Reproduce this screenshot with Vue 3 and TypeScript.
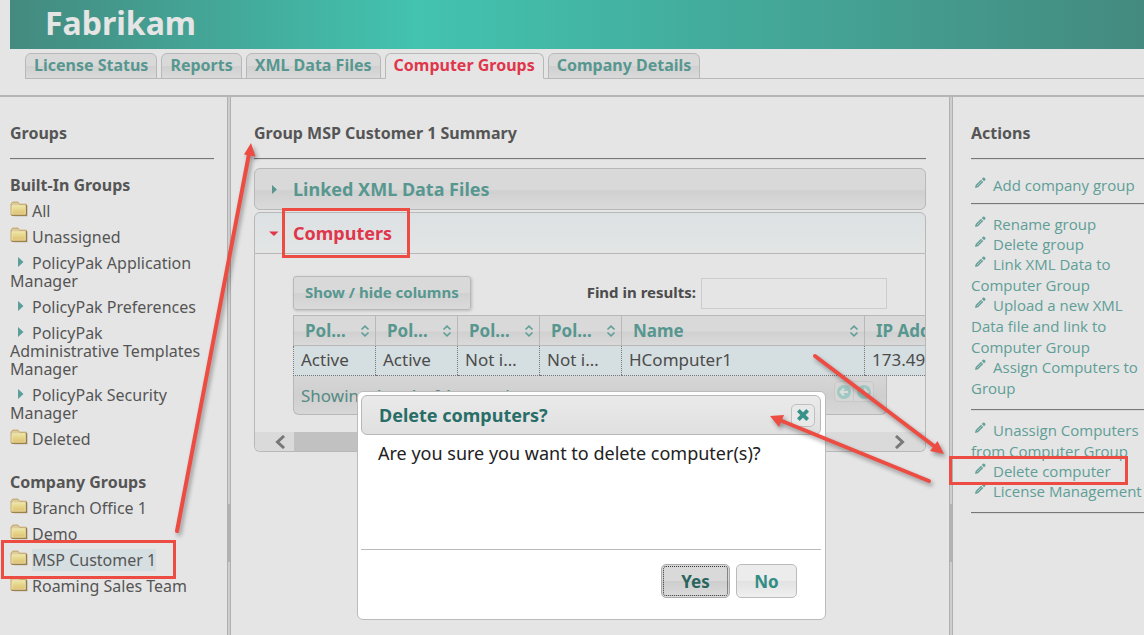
<script setup lang="ts">
import { ref } from 'vue'

interface GroupItem {
  name: string
  kind: 'folder' | 'branch'
}

const tabs = ['License Status', 'Reports', 'XML Data Files', 'Computer Groups', 'Company Details']
const activeTab = ref('Computer Groups')

const builtIn: GroupItem[] = [
  { name: 'All', kind: 'folder' },
  { name: 'Unassigned', kind: 'folder' },
  { name: 'PolicyPak Application Manager', kind: 'branch' },
  { name: 'PolicyPak Preferences', kind: 'branch' },
  { name: 'PolicyPak Administrative Templates Manager', kind: 'branch' },
  { name: 'PolicyPak Security Manager', kind: 'branch' },
  { name: 'Deleted', kind: 'folder' },
]
const company: GroupItem[] = [
  { name: 'Branch Office 1', kind: 'folder' },
  { name: 'Demo', kind: 'folder' },
  { name: 'MSP Customer 1', kind: 'folder' },
  { name: 'Roaming Sales Team', kind: 'folder' },
]
const sections = [
  { title: 'Built-In Groups', items: builtIn },
  { title: 'Company Groups', items: company },
]
const selected = ref('MSP Customer 1')

const actionSets = [
  ['Add company group'],
  ['Rename group', 'Delete group', 'Link XML Data to Computer Group', 'Upload a new XML Data file and link to Computer Group', 'Assign Computers to Group'],
  ['Unassign Computers from Computer Group', 'Delete computer', 'License Management'],
]

const columns = ['Pol…', 'Pol…', 'Pol…', 'Pol…', 'Name', 'IP Address']
const row = ['Active', 'Active', 'Not i…', 'Not i…', 'HComputer1', '173.49.18.20']
const search = ref('')
</script>

<template>
  <div class="page">
    <header class="banner"><h1>Fabrikam</h1></header>

    <nav class="tabs">
      <a v-for="t in tabs" :key="t" href="#" class="tab" :class="{ active: t === activeTab }" @click.prevent="activeTab = t">{{ t }}</a>
    </nav>

    <div class="panes">
      <aside class="groups">
        <h2>Groups</h2>
        <hr />
        <section v-for="s in sections" :key="s.title" class="group-section">
          <h3>{{ s.title }}</h3>
          <ul>
            <li v-for="g in s.items" :key="g.name">
              <svg v-if="g.kind === 'folder'" class="folder" width="19" height="17" viewBox="0 0 18 16" aria-hidden="true">
                <defs>
                  <linearGradient id="folderFill" x1="0" y1="0" x2="0" y2="1">
                    <stop offset="0" stop-color="#ebe6a0" />
                    <stop offset="1" stop-color="#dfc071" />
                  </linearGradient>
                </defs>
                <path d="M3 4h13.5v10.500H4z" fill="#8d8a80" opacity=".7" />
                <path d="M1 13V3L2.500 1H7.500L9 3H15.500V13.500H1.500z" fill="#dccb9b" stroke="#c0a160" stroke-width=".9" />
                <path d="M2 4.500H14.500V12.500H2z" fill="url(#folderFill)" stroke="#f1e6b4" stroke-width=".8" />
                <path d="M1.500 13.500H15.500V4" fill="none" stroke="#94753a" />
              </svg>
              <svg v-else class="branch" width="6" height="10" viewBox="0 0 6 10" aria-hidden="true"><path d="M0 0L5.500 5L0 10z" fill="#5a9f99" /></svg>
              <a href="#" :class="{ selected: g.name === selected }" @click.prevent="selected = g.name">{{ g.name }}</a>
            </li>
          </ul>
        </section>
      </aside>

      <div class="splitter"><span /></div>

      <main class="summary">
        <h2>Group MSP Customer 1 Summary</h2>
        <hr />
        <button type="button" class="acc-head">
          <svg width="10" height="10" viewBox="0 0 10 10" aria-hidden="true"><path d="M3 1L8 5.500L3 10z" fill="#5a9690" /></svg>
          Linked XML Data Files
        </button>
        <button type="button" class="acc-head open">
          <svg width="10" height="10" viewBox="0 0 10 10" aria-hidden="true"><path d="M0 3.500H9.500L5 8z" fill="#e0364c" /></svg>
          Computers
        </button>
        <section class="acc-body">
          <div class="scroll-area">
            <div class="toolbar">
              <button type="button" class="columns-btn">Show / hide columns</button>
              <label for="find">Find in results:</label>
              <input id="find" v-model="search" type="text" />
            </div>
            <table>
              <colgroup>
                <col class="c-small" /><col class="c-small" /><col class="c-small" /><col class="c-small" />
                <col class="c-name" /><col class="c-ip" />
              </colgroup>
              <thead>
                <tr>
                  <th v-for="(c, i) in columns" :key="i" scope="col">
                    <div class="th-in">
                      <span>{{ c }}</span>
                      <svg width="10" height="12" viewBox="0 0 10 12" aria-hidden="true"><path d="M1.500 4.500L5 1.200L8.500 4.500M1.500 7.500L5 10.800L8.500 7.500" fill="none" stroke="#5f9f97" stroke-width="1.600" /></svg>
                    </div>
                  </th>
                </tr>
              </thead>
              <tbody>
                <tr><td v-for="(c, i) in row" :key="i">{{ c }}</td></tr>
              </tbody>
            </table>
            <div class="table-foot">
              <span>Showing 1 to 1 of 1 records</span>
              <div class="pager">
                <button type="button" disabled aria-label="Previous page">
                  <svg width="16" height="16" viewBox="0 0 16 16" aria-hidden="true"><circle cx="8" cy="8" r="7" fill="#9fc8c2" /><path d="M12 8H5M8 4.500L4.500 8L8 11.500" fill="none" stroke="#dcdcdc" stroke-width="2" /></svg>
                </button>
                <button type="button" disabled aria-label="Next page">
                  <svg width="16" height="16" viewBox="0 0 16 16" aria-hidden="true"><circle cx="8" cy="8" r="7" fill="#9fc8c2" /><path d="M4 8H11M8 4.500L11.500 8L8 11.500" fill="none" stroke="#dcdcdc" stroke-width="2" /></svg>
                </button>
              </div>
            </div>
          </div>
          <div class="hscroll">
            <svg width="12" height="14" viewBox="0 0 12 14" aria-hidden="true"><path d="M10 1L3.500 7L10 13" fill="none" stroke="#787878" stroke-width="3" /></svg>
            <div class="track"><div class="thumb" /></div>
            <svg width="12" height="14" viewBox="0 0 12 14" aria-hidden="true"><path d="M2 1L8.500 7L2 13" fill="none" stroke="#787878" stroke-width="3" /></svg>
          </div>
        </section>
      </main>

      <div class="splitter"><span /></div>

      <aside class="actions">
        <h2>Actions</h2>
        <hr />
        <template v-for="(set, i) in actionSets" :key="i">
          <ul>
            <li v-for="a in set" :key="a">
              <svg class="pencil" width="12" height="12" viewBox="0 0 12 12" aria-hidden="true">
                <path d="M1 11L1.700 8L7 2.700L9.300 5L4 10.300z" fill="#64a098" />
                <path d="M7.800 1.900L9 .7Q9.700 .2 10.400 .8L11.200 1.600Q11.800 2.300 11.300 3L10.100 4.200z" fill="#64a098" />
                <path d="M3 9L7.600 4.400" stroke="#b5ceca" stroke-width=".9" />
              </svg>
              <a href="#" @click.prevent>{{ a }}</a>
            </li>
          </ul>
          <hr />
        </template>
      </aside>
    </div>

    <div class="dialog" role="dialog" aria-labelledby="dlgTitle">
      <div class="dlg-title">
        <h2 id="dlgTitle">Delete computers?</h2>
        <button type="button" aria-label="Close">
          <svg width="14" height="14" viewBox="0 0 12 12" aria-hidden="true"><path d="M2 2L10 10M10 2L2 10" stroke="#38928a" stroke-width="3.200" /></svg>
        </button>
      </div>
      <p>Are you sure you want to delete computer(s)?</p>
      <div class="dlg-buttons">
        <button type="button" class="yes">Yes</button>
        <button type="button">No</button>
      </div>
    </div>

    <svg class="marks" width="1144" height="635" viewBox="0 0 1144 635" aria-hidden="true">
      <g fill="none" stroke="#ed4c43" stroke-width="3">
        <rect x="283.500" y="209.500" width="125" height="47" />
        <rect x="2.500" y="541.500" width="172" height="36" />
        <rect x="950.500" y="457.500" width="176" height="26" />
      </g>
      <g class="arrows" stroke="#ed4c43" fill="#ed4c43" stroke-width="4" stroke-linecap="round">
        <path d="M177 531L249 154" /><path d="M251 143L255.500 156.500L244 154.500z" stroke="none" />
        <path d="M815 356L934 446" /><path d="M944 454L930 451L937.500 441z" stroke="none" />
        <path d="M929 481L782 421" /><path d="M770 416L784 415L779 427z" stroke="none" />
      </g>
    </svg>
  </div>
</template>

<style>
body { background: #e5e5e5; overflow: hidden; }
</style>

<style scoped>
.page { position: relative; font-family: "Noto Sans", "Open Sans", sans-serif; font-size: 16px; line-height: 18px; color: #555; min-height: 100vh; overflow: hidden; }
h1, h2, h3, p, ul { margin: 0; padding: 0; }
ul { list-style: none; }
a { color: inherit; text-decoration: none; }
button, input { font-family: inherit; margin: 0; box-sizing: border-box; }
hr { margin: 0; border: 0; border-top: 1px solid #777; border-bottom: 1px solid #d8d8d8; }

.banner { margin-left: 10px; height: 49px; background: linear-gradient(90deg, #448a7f, #43c3b0 36%, #448a7f); padding-left: 35px; box-sizing: border-box; }
h1 { font-size: 32px; line-height: 46px; color: #e5e5e5; }

.tabs { display: flex; gap: 4px; margin: 4px 0 16px 25px; border-bottom: 1px solid #b8b8b8; }
.tab { box-sizing: border-box; height: 26px; margin-bottom: -1px; padding: 0 8px; border: 1px solid #b8b8b8; border-radius: 6px 6px 0 0; background: linear-gradient(#d9d9d9 50%, #d0d0d0 51%, #dadada); color: #579790; font-weight: 700; font-size: 16px; line-height: 23px; white-space: nowrap; }
.tab.active { color: #e0364c; background: #e5e5e5; border-bottom-color: #e5e5e5; }

.panes { display: grid; grid-template-columns: 227px 4px 1fr 4px 191px; border-top: 2px solid #b5b5b5; min-height: calc(100vh - 97px); }
.panes h2 { font-size: 16px; line-height: 22px; margin: 25px 0 14px; white-space: nowrap; }
.splitter { position: relative; background: #cecece; border: solid #b0b0b0; border-width: 0 1px; }
.splitter span { position: absolute; left: 0; right: 0; top: 407px; height: 58px; background: #b2b2b2; }

.groups { padding: 0 13px 0 10px; }
.group-section { margin-top: 16px; }
.group-section + .group-section { margin-top: 25px; }
h3 { font-size: 16px; line-height: 18px; }
.groups li { padding-top: 8px; }
.folder { margin: -3px 3px 0 0; vertical-align: -1px; }
.branch { margin: -3px 8px 0 8px; vertical-align: 2px; }
.selected { background: #d5dee0; }

.summary { padding: 0 23px; min-width: 0; }
.acc-head { display: flex; align-items: center; width: 100%; height: 42px; margin-top: 8px; padding: 0 14px; border: 1px solid #b8b8b8; border-radius: 6px; background: linear-gradient(#d9d9d9 50%, #d0d0d0 55%, #dadada); color: #579790; font-size: 18px; font-weight: 700; gap: 14px; }
.acc-head.open { margin-top: 2px; color: #e0364c; background: linear-gradient(#dce1e3, #e3e5e5); border-radius: 6px 6px 0 0; }
.acc-body { border: 1px solid #b8b8b8; border-top: 0; border-radius: 0 0 6px 6px; overflow: hidden; }
.scroll-area { padding: 22px 0 17px 38px; overflow: hidden; }
.toolbar { display: flex; align-items: center; width: 594px; margin-bottom: 5px; }
.columns-btn { height: 34px; padding: 0 11px 2px; border: 1px solid #b8b8b8; border-radius: 3px; background: linear-gradient(#d9d9d9 50%, #d1d1d1 51%, #dadada); box-shadow: 1px 1px 3px #bbb; color: #579790; font-weight: 700; font-size: 15px; }
.toolbar label { margin-left: auto; padding-bottom: 2px; font-weight: 700; font-size: 15px; color: #4c4c4c; }
.toolbar input { width: 186px; height: 31px; margin-left: 5px; border: 1px solid #ccc; background: #e5e5e5; font-size: 15px; }

table { table-layout: fixed; width: 725px; border-collapse: collapse; font-size: 17px; }
.c-small { width: 82px; } .c-name { width: 243px; } .c-ip { width: 154px; }
th { height: 29px; padding: 0 5px 0 11px; border: 1px solid #b8b8b8; background: linear-gradient(#d9d9d9 50%, #d0d0d0 52%, #dadada); color: #579790; text-align: left; }
.th-in { display: flex; align-items: center; justify-content: space-between; white-space: nowrap; }
td { height: 27px; padding: 0 7px 2px; background: #d5dee0; border-left: 1px dotted #777; border-bottom: 1px dotted #777; color: #4c4c4c; white-space: nowrap; }
.table-foot { display: flex; justify-content: space-between; box-sizing: border-box; width: 594px; height: 39px; padding: 5px 12px 0 7px; border: 1px solid #b8b8b8; border-top: 0; border-radius: 0 0 6px 6px; background: linear-gradient(#d6d6d6, #cfcfcf 50%, #d7d7d7); color: #568a84; font-size: 17px; line-height: 30px; }
.pager { display: flex; }
.pager button { width: 20px; height: 21px; padding: 0; border: 1px solid #c8c8c8; background: #d6d6d6; line-height: 0; }
.pager button:first-child { border-radius: 5px 0 0 5px; }
.pager button:last-child { border-radius: 0 5px 5px 0; border-left: 0; }
.hscroll { display: flex; align-items: center; height: 19px; background: #dadada; padding: 0 19px; gap: 8px; }
.track { flex: 1; height: 19px; }
.thumb { width: 70%; height: 100%; background: #c1c1c1; }

.actions { padding-left: 18px; min-width: 0; font-family: "Open Sans", "Noto Sans", sans-serif; color: #609e97; font-size: 15px; line-height: 21px; }
.actions h2 { font-family: "Noto Sans", sans-serif; color: #555; }
.actions ul { padding: 9px 0 10px; }
.actions h2 + hr + ul { padding: 15px 0 7px; }
.actions li + li { margin-top: -1px; }
.pencil { margin: 0 7px 0 3px; vertical-align: 2px; }

.dialog { position: absolute; left: 357px; top: 391px; width: 469px; height: 229px; box-sizing: border-box; padding: 3px 4px 3px 3px; border: 1px solid #bbb; border-radius: 6px; background: #fff; color: #222; display: flex; flex-direction: column; }
.dlg-title { display: flex; align-items: center; justify-content: space-between; box-sizing: border-box; height: 40px; padding: 0 5px 0 17px; border: 1px solid #b8b8b8; border-radius: 6px; background: linear-gradient(#eaeaea, #e0e0e0); }
.dlg-title h2 { font-size: 18px; color: #286d67; }
.dlg-title button { width: 24px; height: 23px; padding: 0; border: 1px solid #c0c0c0; border-radius: 5px; background: #e9e9e9; line-height: 0; }
.dialog p { padding: 7px 17px; font-size: 18px; line-height: 22px; flex: 1; white-space: nowrap; }
.dlg-buttons { display: flex; justify-content: flex-end; gap: 6px; box-sizing: border-box; height: 67px; border-top: 1px solid #bbb; padding: 14px 24px 0 0; }
.dlg-buttons button { width: 61px; height: 34px; border: 1px solid #bbb; border-radius: 5px; background: linear-gradient(#ececec 50%, #e2e2e2 51%, #efefef); color: #338d84; font-size: 17px; font-weight: 700; padding: 0; }
.dlg-buttons .yes { width: 69px; color: #28655f; background: linear-gradient(#d9d9d9 50%, #cdcdcd 51%, #dcdcdc); border-color: #aaa; outline: 1px dotted #333; outline-offset: -3px; }

.marks { position: absolute; left: 0; top: 0; pointer-events: none; }
.arrows { filter: drop-shadow(2px 3px 2px rgba(0, 0, 0, .35)); }
</style>
